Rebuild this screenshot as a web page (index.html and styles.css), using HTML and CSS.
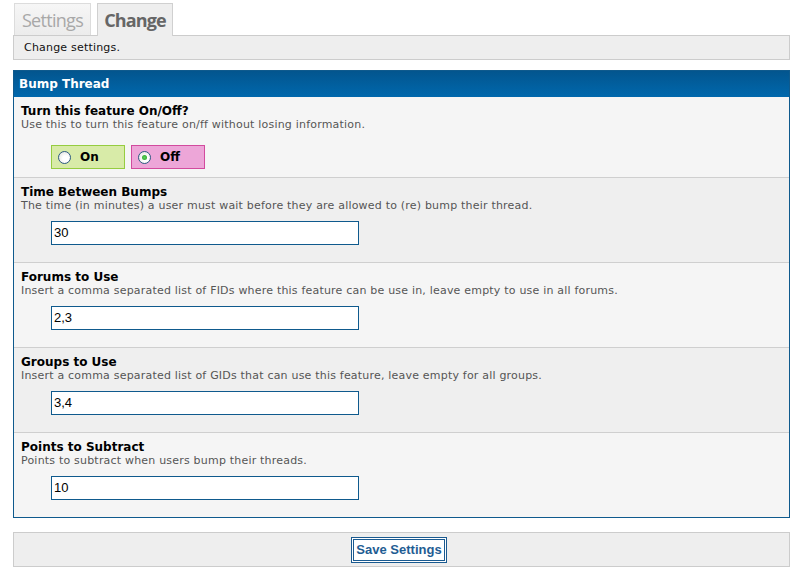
FILE: index.html
```html
<!DOCTYPE html>
<html>
<head>
<meta charset="utf-8">
<link rel="stylesheet" href="styles.css">
</head>
<body>
<div class="tabs">
  <div class="tab">Settings</div>
  <div class="tab active">Change</div>
</div>
<div class="subbar">Change settings.</div>

<div class="panel">
  <div class="panel-head">Bump Thread</div>
  <div class="row light first">
    <div class="title">Turn this feature On/Off?</div>
    <div class="desc">Use this to turn this feature on/ff without losing information.</div>
    <div class="radios">
      <label class="radio on"><span class="dot"></span>On</label>
      <label class="radio off"><span class="dot checked"></span>Off</label>
    </div>
  </div>
  <div class="row dark">
    <div class="title">Time Between Bumps</div>
    <div class="desc">The time (in minutes) a user must wait before they are allowed to (re) bump their thread.</div>
    <div class="field">30</div>
  </div>
  <div class="row light">
    <div class="title">Forums to Use</div>
    <div class="desc">Insert a comma separated list of FIDs where this feature can be use in, leave empty to use in all forums.</div>
    <div class="field">2,3</div>
  </div>
  <div class="row dark">
    <div class="title">Groups to Use</div>
    <div class="desc">Insert a comma separated list of GIDs that can use this feature, leave empty for all groups.</div>
    <div class="field">3,4</div>
  </div>
  <div class="row light last">
    <div class="title">Points to Subtract</div>
    <div class="desc">Points to subtract when users bump their threads.</div>
    <div class="field">10</div>
  </div>
</div>

<div class="footer">
  <button class="save">Save Settings</button>
</div>
</body>
</html>
```
FILE: styles.css
```css
html, body {
  margin: 0;
  padding: 0;
  background: #fff;
}
body {
  padding: 3px 15px 0 13px;
  font-family: "DejaVu Sans", Verdana, sans-serif;
  font-size: 11px;
  color: #000;
}
.tabs {
  display: flex;
  gap: 6px;
  margin-left: 1px;
  height: 32px;
  position: relative;
  z-index: 1;
}
.tab {
  box-sizing: border-box;
  width: 77px;
  height: 32px;
  border: 1px solid #dcdcdc;
  border-bottom: none;
  background: linear-gradient(#f6f6f6, #ececec);
  font-family: "Open Sans", sans-serif;
  font-size: 18px;
  letter-spacing: -0.7px;
  color: #a8a8a8;
  text-align: center;
  line-height: 32px;
}
.tab.active {
  width: 76px;
  height: 33px;
  background: #eee;
  border-color: #d0d0d0;
  color: #666;
  font-weight: bold;
  letter-spacing: -0.9px;
}
.subbar {
  box-sizing: border-box;
  height: 25px;
  border: 1px solid #ccc;
  background: #eee;
  padding-left: 10px;
  line-height: 23px;
  color: #111;
  letter-spacing: 0.2px;
}
.panel {
  margin-top: 10px;
  border: 1px solid #0f5a8d;
}
.panel-head {
  height: 26px;
  line-height: 26px;
  padding-left: 5px;
  background: linear-gradient(#03558e, #0068ad);
  color: #fff;
  font-weight: bold;
  font-size: 12px;
}
.row {
  padding: 7px 7px 0;
  border-bottom: 1px solid #cfcfcf;
  height: 77px;
}
.row.light { background: #f5f5f5; }
.row.dark { background: #efefef; }
.row.first { height: 73px; }
.row.last { border-bottom: none; height: 77px; }
.title {
  font-weight: bold;
  font-size: 12px;
  line-height: 14px;
  color: #000;
}
.desc {
  font-size: 11px;
  line-height: 14px;
  color: #555;
  letter-spacing: 0.2px;
}
.field {
  box-sizing: border-box;
  margin: 8px 0 0 30px;
  width: 308px;
  height: 24px;
  border: 1px solid #0f5a8d;
  background: #fff;
  font-family: "Liberation Sans", Arial, sans-serif;
  font-size: 13px;
  line-height: 22px;
  padding-left: 2px;
  color: #000;
}
.radios {
  display: flex;
  gap: 6px;
  margin: 13px 0 0 30px;
}
.radio {
  box-sizing: border-box;
  width: 74px;
  height: 24px;
  display: flex;
  align-items: center;
  font-weight: bold;
  font-size: 12px;
  padding-left: 6px;
}
.radio.on { background: #d8eba8; border: 1px solid #96cc40; }
.radio.off { background: #eda6d8; border: 1px solid #d24b9e; }
.dot {
  box-sizing: border-box;
  width: 13px;
  height: 13px;
  border-radius: 50%;
  border: 1px solid #2c5a82;
  background: radial-gradient(circle at 60% 60%, #fff 30%, #dcdcd8 100%);
  margin-right: 9px;
  position: relative;
}
.dot.checked::after {
  content: "";
  position: absolute;
  left: 3px;
  top: 3px;
  width: 5px;
  height: 5px;
  border-radius: 50%;
  background: radial-gradient(circle, #5fd05f, #21a121);
}
.footer {
  margin-top: 14px;
  box-sizing: border-box;
  height: 35px;
  border: 1px solid #ccc;
  background: #eee;
  display: flex;
  justify-content: center;
  align-items: center;
}
.save {
  box-sizing: border-box;
  width: 96px;
  height: 26px;
  margin-left: -5px;
  border: 3px double #1a5a90;
  background: #fff;
  color: #1f5d93;
  font-family: "Liberation Sans", Arial, sans-serif;
  font-weight: bold;
  font-size: 13px;
  padding: 0;
}
```
